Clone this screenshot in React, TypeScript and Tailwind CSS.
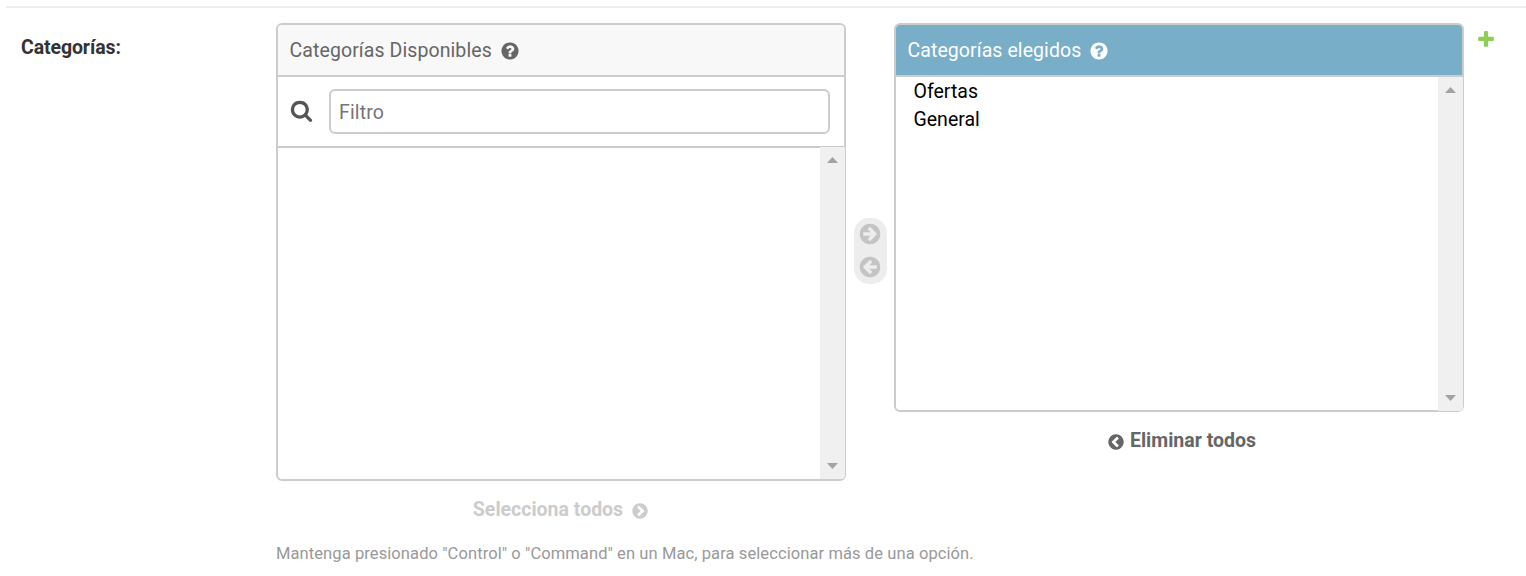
import React from 'react';

const DISC =
  'm0 0q0 209-103 385.5t-279.5 279.5-385.5 103-385.5-103-279.5-279.5-103-385.5 103-385.5 279.5-279.5 385.5-103 385.5 103 279.5 279.5 103 385.5z';

const PATHS = {
  help:
    'M1024 1376v-192q0-14-9-23t-23-9h-192q-14 0-23 9t-9 23v192q0 14 9 23t23 9h192q14 0 23-9t9-23zm256-672q0-88-55.5-163t-138.5-116-170-41q-243 0-371 213-15 24 8 42l132 100q7 6 19 6 16 0 25-12 53-68 86-92 34-24 86-24 48 0 85.5 26t37.5 59q0 38-20 61t-68 45q-63 28-115.5 86.5t-52.5 125.5v36q0 14 9 23t23 9h192q14 0 23-9t9-23q0-19 21.5-49.5t54.5-49.5q32-18 49-28.5t46-35 44.5-48 28-60.5 12.5-81zM1664 896' +
    DISC,
  search:
    'M1216 832q0-185-131.5-316.5t-316.5-131.5-316.5 131.5-131.5 316.5 131.5 316.5 316.5 131.5 316.5-131.5 131.5-316.5zm512 832q0 52-38 90t-90 38q-54 0-90-38l-343-342q-179 124-399 124-143 0-273.5-55.5t-225-150-150-225-55.5-273.5 55.5-273.5 150-225 225-150 273.5-55.5 273.5 55.5 225 150 150 225 55.5 273.5q0 220-124 399l343 343q37 37 37 90z',
  plus:
    'M1600 796v192q0 40-28 68t-68 28h-416v416q0 40-28 68t-68 28h-192q-40 0-68-28t-28-68v-416h-416q-40 0-68-28t-28-68v-192q0-40 28-68t68-28h416v-416q0-40 28-68t68-28h192q40 0 68 28t28 68v416h416q40 0 68 28t28 68z',
  arrow:
    'M1413 896q0-27-18-45l-91-91-362-362q-18-18-45-18t-45 18l-91 91q-18 18-18 45t18 45l189 189h-502q-26 0-45 19t-19 45v128q0 26 19 45t45 19h502l-189 189q-19 19-19 45t19 45l91 91q18 18 45 18t45-18l362-362 91-91q18-18 18-45zM1664 896' +
    DISC,
  chevron:
    'M845 1395l454-454q19-19 19-45t-19-45l-454-454q-19-19-45-19t-45 19l-102 102q-19 19-19 45t19 45l307 307-307 307q-19 19-19 45t19 45l102 102q19 19 45 19t45-19zM1664 896' +
    DISC,
};

function Icon({ name, className }: { name: keyof typeof PATHS; className: string }) {
  return (
    <svg viewBox="0 0 1792 1792" className={`shrink-0 fill-current ${className}`} aria-hidden="true">
      <path fillRule="evenodd" d={PATHS[name]} />
    </svg>
  );
}

function Scrollbar({ className }: { className: string }) {
  return (
    <div
      className={`-mr-px flex w-[25px] shrink-0 flex-col items-center justify-between rounded-br-[4px] bg-[#f0f0f0] py-2.5 text-[#a3a3a3] ${className}`}
    >
      <svg viewBox="0 0 11 6" className="h-1.5 w-[11px] fill-current" aria-hidden="true">
        <path d="M0 6L5.5 0L11 6z" />
      </svg>
      <svg viewBox="0 0 11 6" className="h-1.5 w-[11px] fill-current" aria-hidden="true">
        <path d="M0 0L5.5 6L11 0z" />
      </svg>
    </div>
  );
}

export default function App() {
  return (
    <div className="h-[576px] w-full overflow-hidden bg-white pt-1.5 pl-1.5 font-[Roboto,sans-serif] text-[19.5px]">
      <div className="flex items-start border-t-2 border-[#eee] pt-[15px]">
        <label className="w-[270px] shrink-0 pt-2.5 pl-[15px] leading-[30px] font-bold tracking-[-0.1px] text-[#333]">
          Categorías:
        </label>

        <section className="w-[570px] shrink-0">
          <div className="flex h-[458px] flex-col rounded-md border-2 border-[#ccc]">
            <h2 className="flex h-[52px] shrink-0 items-center rounded-t-[4px] border-b-2 border-[#ccc] bg-[#f8f8f8] pt-0.5 pl-[11.5px] tracking-[0.09px] text-[#666]">
              Categorías Disponibles
              <Icon name="help" className="ml-2 size-5" />
            </h2>
            <div className="flex h-[71px] shrink-0 items-start border-b-2 border-[#ccc] pt-3 pl-3">
              <Icon name="search" className="mt-[9.5px] size-[23px] text-[#555]" />
              <input
                placeholder="Filtro"
                className="ml-4 h-[45px] w-[501px] rounded-md border-2 border-[#ccc] bg-white px-2 pt-0.5 tracking-[0.15px] text-[#333] placeholder:text-[#757575]"
              />
            </div>
            <div className="flex flex-1 justify-end">
              <Scrollbar className="-mt-px" />
            </div>
          </div>
          <div className="mt-3.5 flex h-[30px] items-center justify-center gap-2 font-bold text-[#ccc]">
            Selecciona todos
            <Icon name="chevron" className="mt-px size-[18px]" />
          </div>
          <p className="mt-[17px] text-[16.5px] leading-6 tracking-[0.093px] whitespace-nowrap text-[#999]">
            Mantenga presionado "Control" o "Command" en un Mac, para seleccionar más de una opción.
          </p>
        </section>

        <div className="mt-[195px] ml-2 flex h-[66px] w-[33px] shrink-0 flex-col items-start rounded-[15px] bg-[#ededed] pt-[3.7px] pl-[3.8px] text-[#c4c4c4]">
          <Icon name="arrow" className="size-6" />
          <Icon name="arrow" className="mt-[9px] size-6 -scale-x-100" />
        </div>

        <section className="ml-[7px] w-[570px] shrink-0">
          <div className="flex h-[389px] flex-col rounded-md border-2 border-[#ccc]">
            <h2 className="flex h-[52px] shrink-0 items-center rounded-t-[4px] border-b-2 border-[#ccc] bg-[#79aec8] pt-0.5 pl-[11.5px] tracking-[0.08px] text-white">
              Categorías elegidos
              <Icon name="help" className="ml-2 size-5" />
            </h2>
            <div className="flex flex-1 justify-between">
              <ul className="pt-px pl-[17.5px] leading-7 text-black">
                <li>Ofertas</li>
                <li>General</li>
              </ul>
              <Scrollbar className="-mb-px" />
            </div>
          </div>
          <div className="mt-3.5 flex h-[30px] items-center justify-center gap-[5px] pl-[5px] font-bold text-[#666]">
            <Icon name="chevron" className="mt-px size-[18px] -scale-x-100" />
            Eliminar todos
          </div>
        </section>

        <Icon name="plus" className="mt-[6px] ml-3 size-5 text-[#8fcd57]" />
      </div>
    </div>
  );
}
